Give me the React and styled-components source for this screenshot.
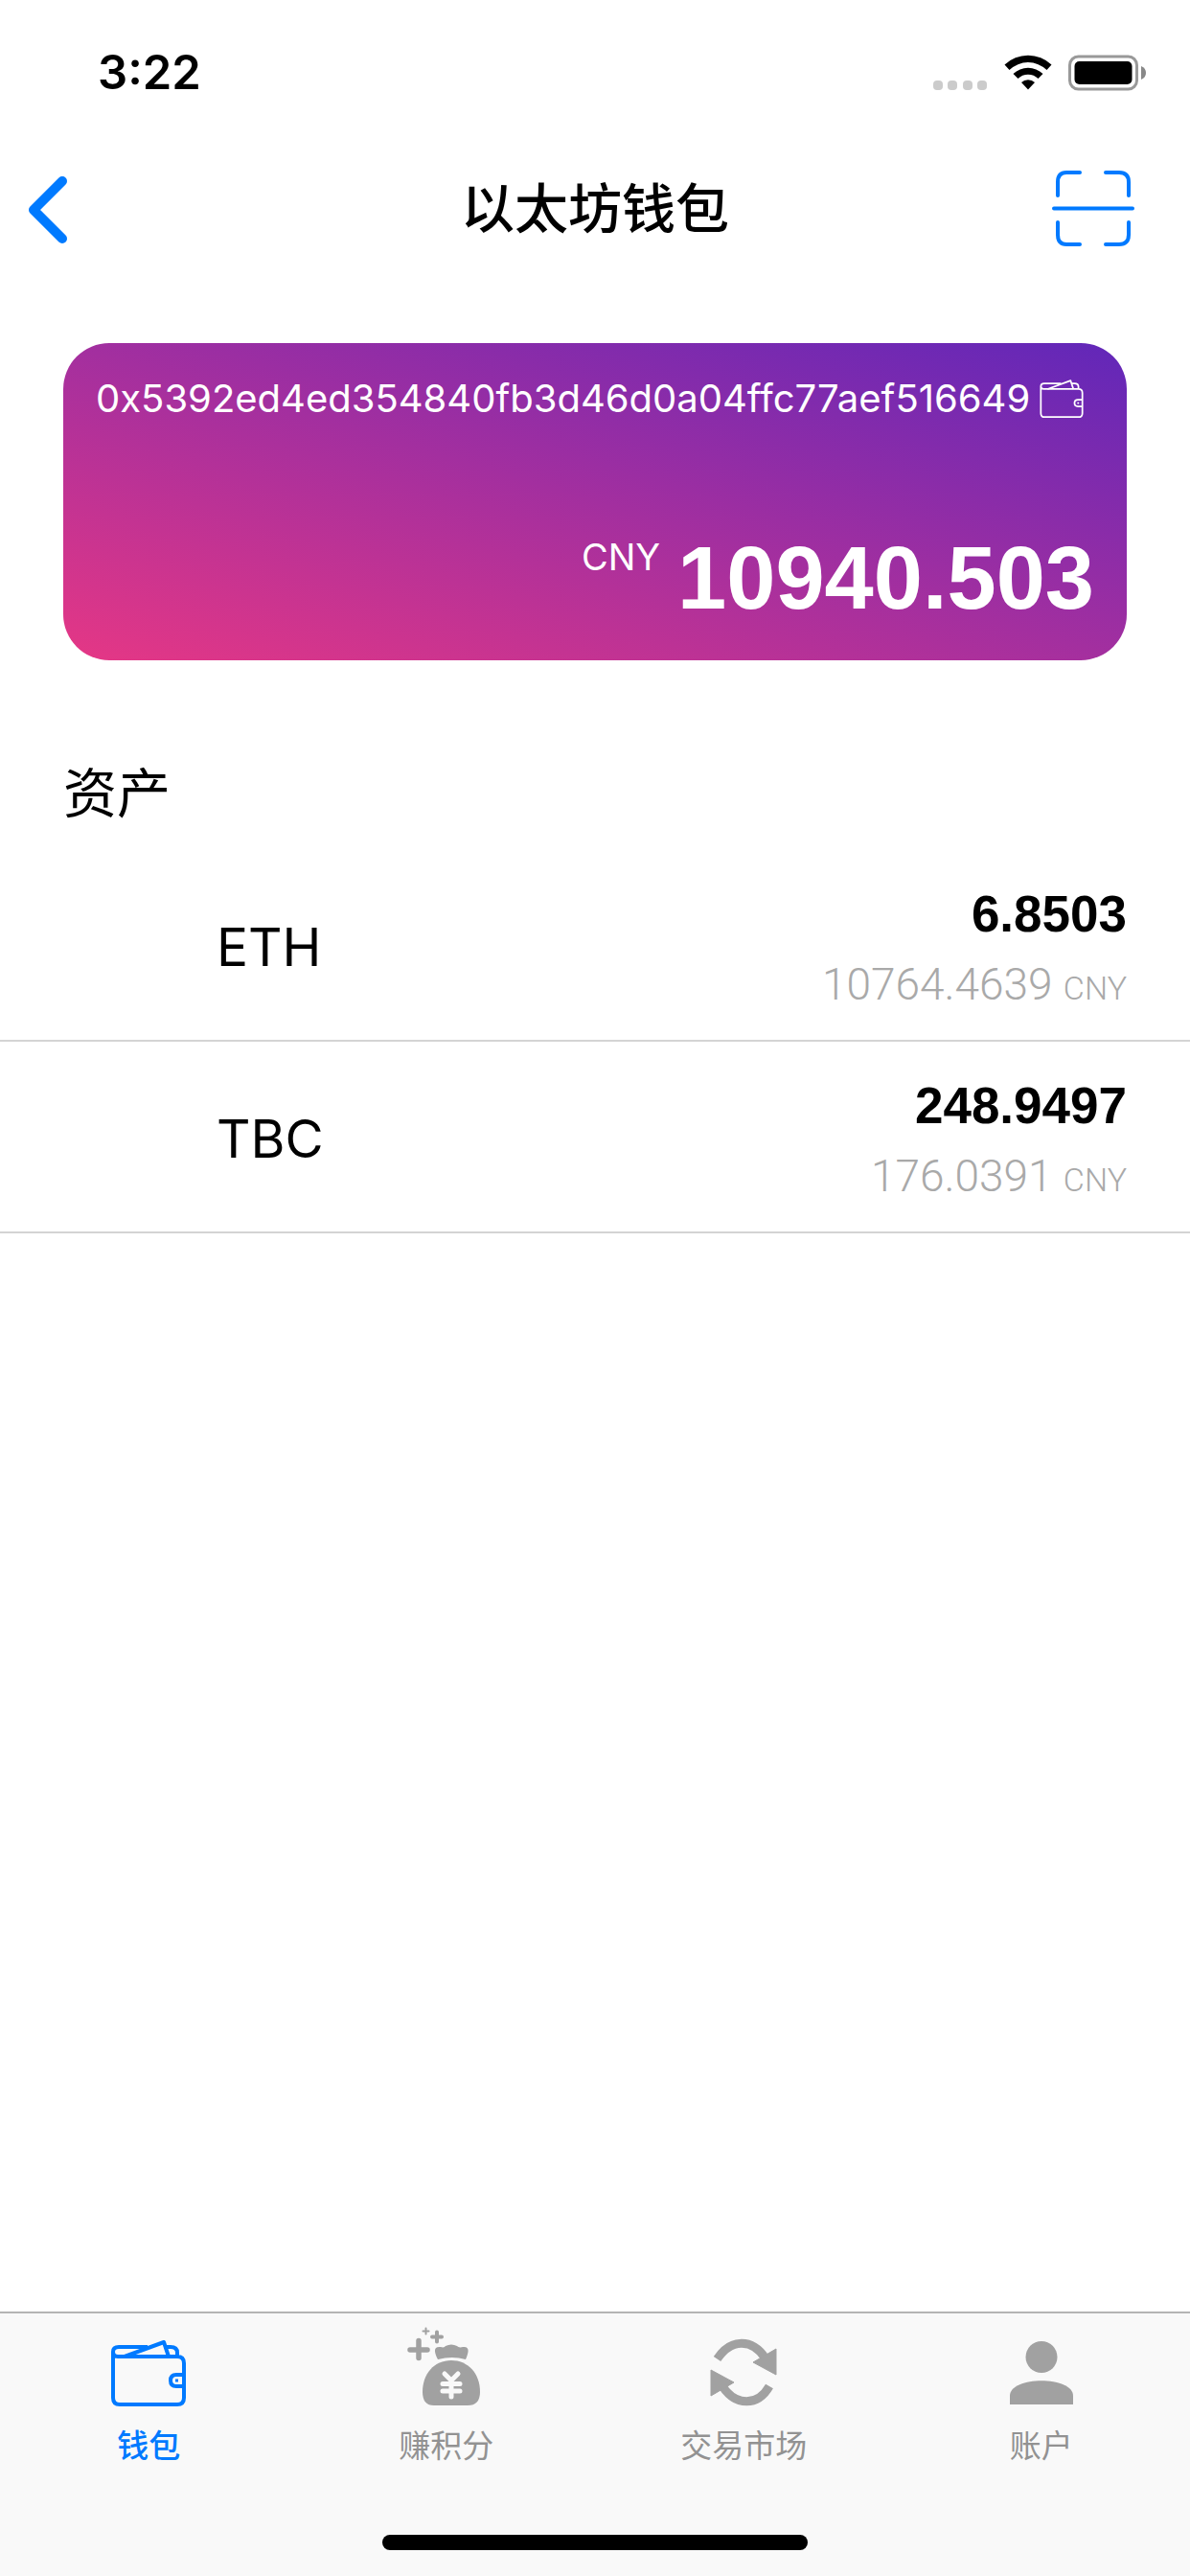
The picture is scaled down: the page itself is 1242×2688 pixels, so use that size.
import React from "react";
import styled, { createGlobalStyle, css } from "styled-components";

const ui = `Inter, "Noto Sans CJK SC", sans-serif`;
const numeric = `"Liberation Sans", Arial, sans-serif`;
const light = `Roboto, "Liberation Sans", sans-serif`;
const blue = "#007aff";
const grey = "#a1a1a1";

const GlobalStyle = createGlobalStyle`
  *, *::before, *::after { box-sizing: border-box; }
  body { margin: 0; background: #fff; color: #000; font-family: ${ui}; }
  h1, h2, p, ul { margin: 0; padding: 0; font-weight: 400; }
  ul { list-style: none; }
  svg { display: block; }
  button { padding: 0; border: 0; background: none; color: inherit; font: inherit; cursor: pointer; }
`;

const Screen = styled.div`
  display: flex;
  flex-direction: column;
  min-height: 100vh;
`;

const StatusBar = styled.div`
  display: flex;
  justify-content: space-between;
  height: 132px;
  padding: 46px 45px 0 102px;
`;

const Clock = styled.time`
  font-size: 49px;
  font-weight: 600;
  line-height: 60px;
`;

const StatusIcons = styled.div`
  display: flex;
  height: 60px;
  gap: 17px;
  align-items: center;
`;

const NavBar = styled.header`
  display: grid;
  grid-template-columns: 1fr auto 1fr;
  align-items: center;
  height: 176px;
  padding: 0 28px 4px;
`;

const NavTitle = styled.h1`
  font-size: 56px;
  font-weight: 500;
  line-height: 80px;
`;

const NavButton = styled.button`
  justify-self: ${(p) => (p.$end ? "end" : "start")};
  padding-right: ${(p) => (p.$end ? "30px" : "0")};
  color: ${blue};
`;

const Card = styled.section`
  display: flex;
  flex-direction: column;
  justify-content: space-between;
  height: 331px;
  margin: 50px 66px 0;
  padding: 34px 34px 38px;
  border-radius: 48px;
  color: #fff;
  background: linear-gradient(to top right, #e53785, #6127b9);
`;

const AddressRow = styled.div`
  display: flex;
  align-items: center;
  gap: 10px;
  font-size: 40px;
  line-height: 48px;
`;

const Balance = styled.p`
  display: flex;
  justify-content: flex-end;
  align-items: flex-start;
  gap: 18px;
`;

const BalanceUnit = styled.span`
  font-size: 38px;
  line-height: 52px;
`;

const BalanceValue = styled.span`
  font-family: ${numeric};
  font-size: 92px;
  font-weight: 700;
  line-height: 96px;
`;

const SectionTitle = styled.h2`
  padding: 98px 66px 18px;
  font-size: 56px;
  line-height: 82px;
`;

const AssetRow = styled.li`
  display: flex;
  justify-content: space-between;
  align-items: center;
  height: 200px;
  padding: 4px 66px 0 226px;
  border-bottom: 2px solid #d4d4d4;
`;

const AssetName = styled.span`
  font-size: 55px;
  line-height: 64px;
`;

const AssetFigures = styled.div`
  display: flex;
  flex-direction: column;
  align-items: flex-end;
  gap: 12px;
  padding-top: 8px;
`;

const AssetAmount = styled.span`
  font-family: ${numeric};
  font-size: 53px;
  font-weight: 700;
  line-height: 62px;
`;

const AssetWorth = styled.span`
  color: #a9a9a9;
  font-family: ${light};
  font-size: 46px;
  font-weight: 300;
  line-height: 60px;
`;

const AssetUnit = styled.small`
  font-size: 34px;
`;

const TabBar = styled.nav`
  display: flex;
  flex-direction: column;
  align-items: center;
  justify-content: space-between;
  height: 276px;
  margin-top: auto;
  padding-bottom: 27px;
  border-top: 2px solid #b4b4b4;
  background: #f9f9f9;
`;

const TabList = styled.ul`
  display: grid;
  grid-template-columns: repeat(4, 1fr);
  width: 100%;
`;

const Tab = styled.a`
  display: flex;
  flex-direction: column;
  align-items: center;
  padding-top: 6px;
  color: ${grey};
  text-decoration: none;
  ${(p) => p.$active && css`color: ${blue};`}
`;

const TabArt = styled.span`
  display: grid;
  place-items: center;
  width: 100px;
  height: 100px;
`;

const TabLabel = styled.span`
  margin-top: 8px;
  font-size: 33px;
  font-weight: ${(p) => (p.$active ? 500 : 400)};
  line-height: 48px;
  color: ${(p) => (p.$active ? blue : "#929292")};
`;

const HomeIndicator = styled.div`
  width: 36%;
  max-width: 444px;
  height: 16px;
  border-radius: 8px;
  background: #000;
`;

const SignalDots = () => (
  <svg width="57" height="60" viewBox="0 0 57 60" fill="#cbcbcb" aria-hidden="true">
    {[0, 15, 31, 46].map((x) => (
      <rect key={x} x={x} y="38" width="10" height="10" rx="4" />
    ))}
  </svg>
);

const WifiIcon = () => (
  <svg width="50" height="60" viewBox="0 0 50 60" aria-hidden="true">
    <path d="M0.5 21.5A35.5 35.5 0 0 1 49.5 21.5L44.5 27A28 28 0 0 0 5.5 27Z" />
    <path d="M9.5 31A22.5 22.5 0 0 1 40.5 31L35.5 36A15 15 0 0 0 14.5 36Z" />
    <path d="M18 40A10 10 0 0 1 32 40L25 47.5Z" />
  </svg>
);

const BatteryIcon = () => (
  <svg width="82" height="60" viewBox="0 0 82 60" aria-hidden="true">
    <rect x="1.5" y="13" width="70" height="34" rx="9" fill="none" stroke="#999" strokeWidth="3" />
    <rect x="6.5" y="18" width="60" height="24" rx="5" />
    <path d="M76 23Q81 25 81 30Q81 35 76 37Z" fill="#888" />
  </svg>
);

const BackIcon = () => (
  <svg width="44" height="72" viewBox="0 0 44 72" fill="none" stroke="currentColor" strokeWidth="10" strokeLinecap="round" strokeLinejoin="round" aria-hidden="true">
    <path d="M37 7L7 37L37 67" />
  </svg>
);

const ScanIcon = () => (
  <svg width="86" height="80" viewBox="0 0 86 80" fill="none" stroke="currentColor" strokeWidth="4" strokeLinecap="round" aria-hidden="true">
    <path d="M6 26V12Q6 2 15 2H29M56 2H70Q80 2 80 12V26M80 54V67Q80 77 70 77H56M29 77H15Q6 77 6 67V54M2 39.5H84" />
  </svg>
);

const WalletIcon = ({ width, height, stroke }) => (
  <svg width={width} height={height} viewBox="0 0 78 70" fill="none" stroke="currentColor" strokeWidth={stroke} strokeLinejoin="round" aria-hidden="true">
    <path d="M2 12V60Q2 67 9 67H69Q76 67 76 60V24Q76 17 69 17H7Q2 17 2 12Q2 7 8 7H38M57 7H62Q69 7 69 13V17" />
    <path d="M14 17L55 2L60 17" />
    <path d="M76 36H68Q62 36 62 42Q62 48 68 48H76" />
    <rect x="67" y="40.5" width="3" height="3" fill="currentColor" stroke="none" />
  </svg>
);

const BagIcon = () => (
  <svg width="100" height="100" viewBox="1 0 100 100" fill="currentColor" aria-hidden="true">
    <path d="M22 22.5V40.5M13 32H31" stroke="currentColor" strokeWidth="5.5" strokeLinecap="round" />
    <path d="M41 13.500V23.500M36 18.500H46" stroke="currentColor" strokeWidth="4" strokeLinecap="round" />
    <path d="M29.500 9.500V15.500M26.500 12.500H32.500" stroke="currentColor" strokeWidth="2" strokeLinecap="round" />
    <path d="M42 42C38 34 37 28 45 29C48 30 49 29 50 28Q56 25 62 28C63 29 65 30 68 29C76 28 74 35 71 42Q57 38 42 42Z" />
    <path d="M56 43C73 43 86 56 86 76Q86 90 73 90H38Q26 90 26 76C26 57 38 43 56 43Z" />
    <path d="M49 57L56 64L63 57M56 64V81M47 67.500H65M47 75H65" fill="none" stroke="#f9f9f9" strokeWidth="5" strokeLinecap="round" />
  </svg>
);

const MarketIcon = () => (
  <svg width="100" height="100" viewBox="0 0 100 100" fill="none" stroke="currentColor" aria-hidden="true">
    <path d="M22.5 41.5C37 20 59 20 73 41M77 70C65 91 42 91 28 70" strokeWidth="9" />
    <path d="M60 45L84 31V58ZM40 66L16 80V53Z" fill="currentColor" strokeWidth="1" strokeLinejoin="round" />
  </svg>
);

const AccountIcon = () => (
  <svg width="100" height="100" viewBox="0 0 100 100" fill="currentColor" aria-hidden="true">
    <circle cx="50" cy="39.5" r="16.5" />
    <path d="M17 89V80C17 59 83 59 83 80V89Z" />
  </svg>
);

const WalletSlot = styled.span`
  padding-top: 14px;
`;

const assets = [
  { name: "ETH", amount: "6.8503", worth: "10764.4639" },
  { name: "TBC", amount: "248.9497", worth: "176.0391" },
];

const tabs = [
  { label: "钱包", icon: <WalletSlot><WalletIcon width={78} height={70} stroke={4} /></WalletSlot>, active: true },
  { label: "赚积分", icon: <BagIcon /> },
  { label: "交易市场", icon: <MarketIcon /> },
  { label: "账户", icon: <AccountIcon /> },
];

export default function App() {
  return (
    <>
      <GlobalStyle />
      <Screen>
        <StatusBar>
          <Clock>3:22</Clock>
          <StatusIcons>
            <SignalDots />
            <WifiIcon />
            <BatteryIcon />
          </StatusIcons>
        </StatusBar>
        <NavBar>
          <NavButton aria-label="返回"><BackIcon /></NavButton>
          <NavTitle>以太坊钱包</NavTitle>
          <NavButton $end aria-label="扫一扫"><ScanIcon /></NavButton>
        </NavBar>
        <main>
          <Card>
            <AddressRow>
              <span>0x5392ed4ed354840fb3d46d0a04ffc77aef516649</span>
              <WalletIcon width={46} height={41} stroke={3} />
            </AddressRow>
            <Balance>
              <BalanceUnit>CNY</BalanceUnit>
              <BalanceValue>10940.503</BalanceValue>
            </Balance>
          </Card>
          <SectionTitle>资产</SectionTitle>
          <ul>
            {assets.map((a) => (
              <AssetRow key={a.name}>
                <AssetName>{a.name}</AssetName>
                <AssetFigures>
                  <AssetAmount>{a.amount}</AssetAmount>
                  <AssetWorth>{a.worth} <AssetUnit>CNY</AssetUnit></AssetWorth>
                </AssetFigures>
              </AssetRow>
            ))}
          </ul>
        </main>
        <TabBar>
          <TabList>
            {tabs.map((t) => (
              <li key={t.label}>
                <Tab href="#" $active={t.active}>
                  <TabArt>{t.icon}</TabArt>
                  <TabLabel $active={t.active}>{t.label}</TabLabel>
                </Tab>
              </li>
            ))}
          </TabList>
          <HomeIndicator />
        </TabBar>
      </Screen>
    </>
  );
}
